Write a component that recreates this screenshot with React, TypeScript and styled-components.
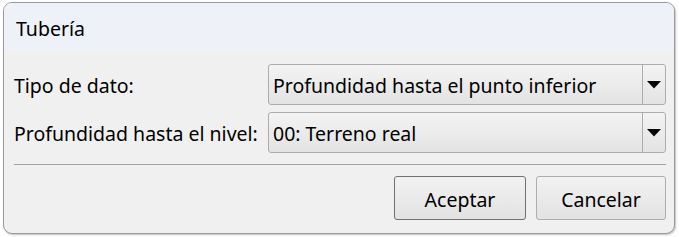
import React from "react";
import styled, { createGlobalStyle } from "styled-components";

const Global = createGlobalStyle`
  html, body { margin: 0; padding: 0; background: #ffffff; }
  body { font-family: "Noto Sans", "Open Sans", sans-serif; }
`;

const Page = styled.div`
  width: 679px;
  height: 237px;
  padding: 2px 4px 3px 3px;
  box-sizing: border-box;
  background: #ffffff;
`;

const Dialog = styled.div`
  width: 100%;
  height: 100%;
  box-sizing: border-box;
  border: 1px solid #9a9a9a;
  border-radius: 9px;
  background: #f0f0f0;
  overflow: hidden;
  display: flex;
  flex-direction: column;
  box-shadow: 1px 1px 2px rgba(0, 0, 0, 0.25);
`;

const TitleBar = styled.div`
  height: 49px;
  background: #eef2f8;
  display: flex;
  align-items: center;
  padding-left: 12px;
  padding-top: 2px;
  box-sizing: border-box;
  font-size: 19.5px;
  color: #000;
`;

const Body = styled.div`
  flex: 1;
  display: flex;
  flex-direction: column;
  padding: 12px 8px 13px 10px;
`;

const Form = styled.div`
  display: grid;
  grid-template-columns: 254px 1fr;
  row-gap: 7px;
`;

const Label = styled.div`
  display: flex;
  align-items: center;
  padding-top: 2px;
  font-size: 19.5px;
  color: #000;
  white-space: nowrap;
`;

const Combo = styled.div`
  height: 41px;
  box-sizing: border-box;
  border: 1px solid #acacac;
  border-radius: 3px;
  background: linear-gradient(#f3f3f3, #e3e3e3);
  display: flex;
  align-items: stretch;
`;

const ComboText = styled.div`
  flex: 1;
  display: flex;
  align-items: center;
  padding-left: 4px;
  padding-top: 2px;
  font-size: 19.5px;
  color: #000;
  white-space: nowrap;
`;

const ComboArrow = styled.div`
  width: 22px;
  border-left: 1px solid #acacac;
  display: flex;
  align-items: center;
  justify-content: center;
`;

const Separator = styled.div`
  height: 1px;
  background: #a0a0a0;
  margin: 11px 0 11px 0;
`;

const Buttons = styled.div`
  display: flex;
  justify-content: flex-end;
  gap: 10px;
`;

const Button = styled.button<{ $default?: boolean }>`
  width: ${(p) => (p.$default ? "132px" : "130px")};
  height: 44px;
  box-sizing: border-box;
  border: 1px solid ${(p) => (p.$default ? "#707070" : "#adadad")};
  border-radius: 3px;
  background: linear-gradient(#f2f2f2, #e2e2e2);
  font-family: "Noto Sans", "Open Sans", sans-serif;
  font-size: 19.5px;
  color: #000;
  padding: 2px 0 0 0;
`;

const Arrow = () => (
  <svg width="14" height="8" viewBox="0 0 14 8">
    <polygon points="0,0 14,0 7,7.5" fill="#000" />
  </svg>
);

export default function App() {
  return (
    <>
      <Global />
      <Page>
        <Dialog>
          <TitleBar>Tubería</TitleBar>
          <Body>
            <Form>
              <Label>Tipo de dato:</Label>
              <Combo>
                <ComboText>Profundidad hasta el punto inferior</ComboText>
                <ComboArrow>
                  <Arrow />
                </ComboArrow>
              </Combo>
              <Label>Profundidad hasta el nivel:</Label>
              <Combo>
                <ComboText>00: Terreno real</ComboText>
                <ComboArrow>
                  <Arrow />
                </ComboArrow>
              </Combo>
            </Form>
            <Separator />
            <Buttons>
              <Button $default>Aceptar</Button>
              <Button>Cancelar</Button>
            </Buttons>
          </Body>
        </Dialog>
      </Page>
    </>
  );
}
